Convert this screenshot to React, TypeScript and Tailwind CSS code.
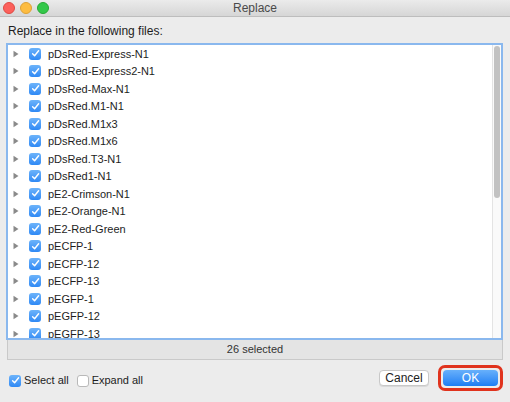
const files = [
  "pDsRed-Express-N1",
  "pDsRed-Express2-N1",
  "pDsRed-Max-N1",
  "pDsRed.M1-N1",
  "pDsRed.M1x3",
  "pDsRed.M1x6",
  "pDsRed.T3-N1",
  "pDsRed1-N1",
  "pE2-Crimson-N1",
  "pE2-Orange-N1",
  "pE2-Red-Green",
  "pECFP-1",
  "pECFP-12",
  "pECFP-13",
  "pEGFP-1",
  "pEGFP-12",
  "pEGFP-13",
];

function Check({ checked = true }: { checked?: boolean }) {
  if (!checked) {
    return <span className="block w-[12px] h-[12px] rounded-[3px] bg-white border border-[#b9b9b9]" />;
  }
  return (
    <span className="flex items-center justify-center w-[12px] h-[12px] rounded-[3px] bg-[#3d95f8] bg-gradient-to-b from-[#6cb3fa] to-[#2e89f5]">
      <svg width="9" height="9" viewBox="0 0 9 9">
        <path d="M1.6 4.8 L3.6 6.8 L7.6 1.8" fill="none" stroke="white" strokeWidth="1.4" strokeLinecap="round" strokeLinejoin="round" />
      </svg>
    </span>
  );
}

export default function App() {
  return (
    <div
      className="w-[510px] h-[402px] bg-[#ececec] flex flex-col overflow-hidden text-[#1d1d1d]"
      style={{ fontFamily: '"Liberation Sans", Arial, sans-serif' }}
    >
      {/* Title bar */}
      <div className="relative h-[17px] shrink-0 bg-gradient-to-b from-[#ebebeb] to-[#d6d6d6] border-b border-[#bdbdbd] flex items-center justify-center">
        <div className="absolute left-[3px] top-[2px] flex gap-[5px]">
          <span className="w-[12px] h-[12px] rounded-full bg-[#fc605b] border border-[#de4a43]" />
          <span className="w-[12px] h-[12px] rounded-full bg-[#fdbc40] border border-[#dea236]" />
          <span className="w-[12px] h-[12px] rounded-full bg-[#34c84a] border border-[#27aa35]" />
        </div>
        <span className="text-[12px] text-[#4a4a4a]">Replace</span>
      </div>

      <div className="flex-1 flex flex-col px-[6px]">
        <div className="h-[26px] flex items-end pb-[3px] pl-[2px] text-[12px]">Replace in the following files:</div>

        {/* File list */}
        <div className="h-[297px] bg-white border-2 border-[#8ab8ee] flex overflow-hidden mr-[1px]">
          <div className="flex-1">
            {files.map((f) => (
              <div key={f} className="h-[17.5px] flex items-center shrink-0">
                <svg width="6" height="8" viewBox="0 0 6 8" className="ml-[5px] mr-[10px]">
                  <path d="M0.5 0.8 L5.5 4 L0.5 7.2 Z" fill="#8a8a8a" />
                </svg>
                <Check />
                <span className="ml-[7px] text-[11px]">{f}</span>
              </div>
            ))}
          </div>
          <div className="w-[9px] bg-[#fafafa] border-l border-[#e4e4e4] flex justify-center pt-[1px]">
            <div className="w-[6px] h-[152px] rounded-full bg-[#c2c2c2]" />
          </div>
        </div>

        {/* Status */}
        <div className="h-[20px] mx-[1px] bg-[#e4e4e4] border-x border-b border-[#c9c9c9] flex items-center justify-center text-[11px] text-[#333]">
          26 selected
        </div>

        {/* Bottom controls */}
        <div className="flex-1 flex items-center pb-[1px]">
          <div className="flex items-center ml-[3px]">
            <Check />
            <span className="ml-[3px] text-[11px]">Select all</span>
          </div>
          <div className="flex items-center ml-[8px]">
            <Check checked={false} />
            <span className="ml-[3px] text-[11px]">Expand all</span>
          </div>
          <div className="ml-auto flex items-center mb-[6px]">
            <button className="w-[50px] h-[16px] bg-white rounded-[4px] border border-[#c8c8c8] shadow-[0_1px_0_rgba(0,0,0,0.08)] text-[12px] flex items-center justify-center">
              Cancel
            </button>
            <div className="ml-[9px] mr-[1px] p-[2px] rounded-[7px] border-[3px] border-[#e0331d]">
              <button className="w-[55px] h-[16px] rounded-[4px] bg-gradient-to-b from-[#67b0fb] to-[#1a7ef3] text-white text-[12px] flex items-center justify-center">
                OK
              </button>
            </div>
          </div>
        </div>
      </div>
    </div>
  );
}
